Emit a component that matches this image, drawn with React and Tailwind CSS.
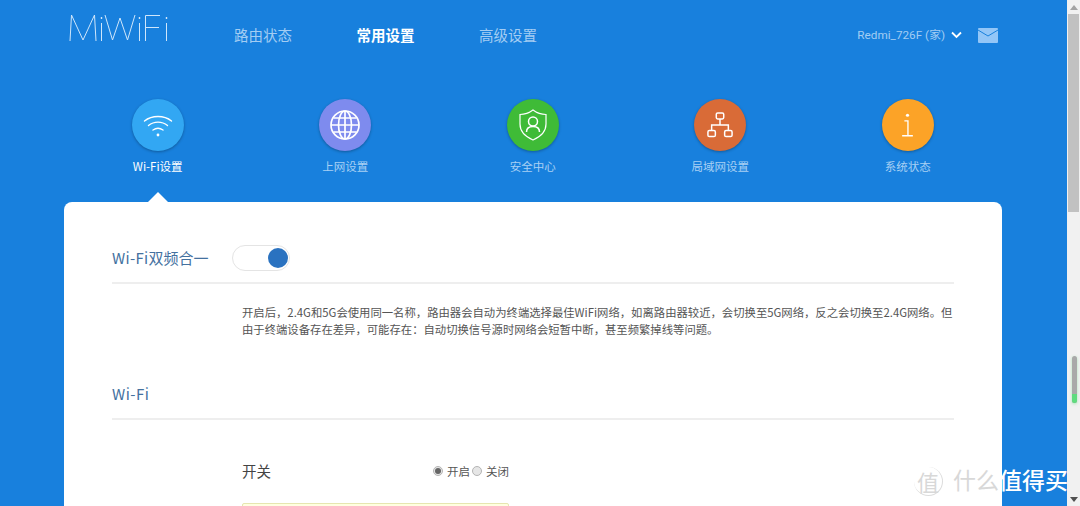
const cjk = { fontFamily: '"Noto Sans CJK SC", "Liberation Sans", sans-serif' };

function Logo() {
  return (
    <svg width="100" height="28" viewBox="0 0 100 28" fill="none" stroke="#cfe6fb" strokeWidth="1" aria-label="MiWiFi">
      <path d="M1 27 L2.5 1 L14 26 L25.5 1 L27 27" />
      <path d="M32.5 9 V27" />
      <path d="M32.5 3 V5" strokeWidth="1.4" />
      <path d="M36 1 L43.5 26 L51 4 L58.5 26 L66 1" />
      <path d="M70.5 9 V27" />
      <path d="M70.5 3 V5" strokeWidth="1.4" />
      <path d="M76.5 27 V1.5 H91 M76.5 13.5 H90" />
      <path d="M97.5 9 V27" />
      <path d="M97.5 3 V5" strokeWidth="1.4" />
    </svg>
  );
}

function WifiIcon() {
  return (
    <svg className="mt-[2px]" width="30" height="24" viewBox="0 0 30 24" fill="none" stroke="#fff" strokeWidth="1.4" strokeLinecap="round">
      <path d="M1.5 7 C9 1 21 1 28.5 7" />
      <path d="M5.5 11.5 C11 7 19 7 24.5 11.5" />
      <path d="M10 16 C13 14 17 14 20 16" />
      <circle cx="15" cy="21" r="1.4" fill="#fff" stroke="none" />
    </svg>
  );
}

function GlobeIcon() {
  return (
    <svg width="30" height="30" viewBox="0 0 30 30" fill="none" stroke="#fff" strokeWidth="1.7">
      <circle cx="15" cy="15" r="14" />
      <ellipse cx="15" cy="15" rx="6.5" ry="14" />
      <path d="M15 1 V29 M1 15 H29 M3.5 8 H26.5 M3.5 22 H26.5" />
    </svg>
  );
}

function ShieldIcon() {
  return (
    <svg width="28" height="32" viewBox="0 0 28 32" fill="none" stroke="#fff" strokeWidth="1.2">
      <path d="M14 1 C18 4 22 5.5 27 5.5 V15 C27 23 21 28 14 31 C7 28 1 23 1 15 V5.5 C6 5.5 10 4 14 1 Z" />
      <circle cx="14" cy="12.5" r="4.5" strokeWidth="1.5" />
      <path d="M7.5 23 C7.5 19.5 10 17.5 14 17.5 C18 17.5 20.5 19.5 20.5 23" strokeWidth="1.5" />
    </svg>
  );
}

function NetIcon() {
  return (
    <svg width="26" height="26" viewBox="0 0 28 28" fill="none" stroke="#fff" strokeWidth="1.6">
      <rect x="10" y="1" width="8" height="6.5" rx="1.5" />
      <rect x="1" y="20" width="8" height="6.5" rx="1.5" />
      <rect x="19" y="20" width="8" height="6.5" rx="1.5" />
      <path d="M14 7.5 V14 M5 20 V14 H23 V20" />
    </svg>
  );
}

function InfoIcon() {
  return (
    <svg width="13" height="25" viewBox="0 0 14 28" fill="none" stroke="#fff" strokeWidth="1.5">
      <circle cx="7" cy="2.5" r="1.8" fill="#fff" stroke="none" />
      <path d="M3.5 8.8 H7.5 V25 M1 25.5 H13" />
    </svg>
  );
}

const items = [
  { label: "Wi-Fi设置", bg: "bg-[#32a7f3]", icon: <WifiIcon />, active: true },
  { label: "上网设置", bg: "bg-[#7e8bee]", icon: <GlobeIcon /> },
  { label: "安全中心", bg: "bg-[#3fbb37]", icon: <ShieldIcon /> },
  { label: "局域网设置", bg: "bg-[#d96b37]", icon: <NetIcon /> },
  { label: "系统状态", bg: "bg-[#fca327]", icon: <InfoIcon /> },
];

function FeatureItem({ label, bg, icon, active }) {
  return (
    <div className="w-[187.5px] flex flex-col items-center">
      <div className={`w-[52px] h-[52px] rounded-full flex items-center justify-center shadow-[0_1px_3px_rgba(0,0,0,0.3)] ${bg}`}>
        {icon}
      </div>
      <div className={`mt-[5px] text-[11.5px] leading-[20px] ${active ? "text-white" : "text-[#a8d0f4]"}`}>{label}</div>
    </div>
  );
}

function Radio({ checked }) {
  return (
    <span className="w-[10px] h-[10px] rounded-full border border-[#b4b4b4] bg-[#e6e6e6] flex items-center justify-center">
      {checked && <span className="w-[6px] h-[6px] rounded-full bg-[#666]" />}
    </span>
  );
}

function Scrollbar() {
  return (
    <div className="w-[13px] h-full bg-[#f1f1f1] flex flex-col items-center relative shrink-0">
      <div className="h-[14px] shrink-0 flex items-center justify-center">
        <div className="w-0 h-0 border-x-[4px] border-x-transparent border-b-[5px] border-b-[#a3a3a3]" />
      </div>
      <div className="w-[11px] h-[198px] shrink-0 bg-[#c1c1c1]" />
      <div className="w-[5px] h-[47px] shrink-0 ml-[2px] mt-[144px] rounded-full bg-[#a9a9a9] relative overflow-hidden shadow-[0_1px_3px_rgba(95,220,126,0.5)]">
        <div className="absolute left-0 right-0 bottom-0 h-[9px] bg-[#5fdc7e]" />
      </div>
      <div className="mt-auto h-[14px] shrink-0 flex items-center justify-center">
        <div className="w-0 h-0 border-x-[4px] border-x-transparent border-t-[5px] border-t-[#505050]" />
      </div>
    </div>
  );
}

function Watermark() {
  return (
    <div className="absolute left-[914px] top-[467px] flex items-start" style={cjk}>
      <div className="w-[29px] h-[29px] rounded-full border-r border-b border-[#dcdcdc] flex items-center justify-center text-[22px] leading-none text-[#d8d8d8]">值</div>
      <div className="ml-[10px] text-[23px] leading-[24px] whitespace-nowrap">
        <span className="text-[#d8d8d8]">什么</span>
        <span className="text-white font-medium">值得买</span>
      </div>
    </div>
  );
}

export default function App() {
  return (
    <div className="w-[1080px] h-[506px] overflow-hidden flex relative bg-[#1880dd]" style={cjk}>
      <div className="flex-1 min-w-0 h-full flex flex-col">
        <header className="h-[70px] shrink-0 flex items-start">
          <div className="ml-[69px] mt-[14px] w-[100px] shrink-0"><Logo /></div>
          <nav className="ml-[65px] mt-[25px] flex gap-[64.5px] text-[14.5px] leading-[20px] text-[#a3cdf3]">
            <span>路由状态</span>
            <span className="text-white font-bold">常用设置</span>
            <span>高级设置</span>
          </nav>
          <div className="ml-auto mr-[69px] mt-[25px] flex items-center">
            <span className="text-[11.75px] leading-[20px] text-[#a3cdf3]" style={{ fontFamily: 'Roboto, "Noto Sans CJK SC", sans-serif' }}>Redmi_726F (家)</span>
            <svg className="ml-[6px]" width="11" height="8" viewBox="0 0 11 8" fill="none" stroke="#fff" strokeWidth="1.8"><path d="M1 1.5 L5.5 6 L10 1.5" /></svg>
            <svg className="ml-[16px]" width="20" height="15" viewBox="0 0 20 15"><rect width="20" height="15" rx="1" fill="#93c6f7" /><path d="M0 2 L10 8 L20 2" fill="none" stroke="#1880dd" strokeWidth="1" /></svg>
          </div>
        </header>
        <div className="mt-[29px] ml-[64px] shrink-0 flex">
          {items.map((it) => <FeatureItem key={it.label} {...it} />)}
        </div>
        <main className="relative ml-[64px] mr-[65px] mt-[26px] flex-1 min-h-0 bg-white rounded-t-[8px] px-[48px] text-[#444]">
          <div className="absolute left-[94px] -top-[10px] -ml-[10px] w-0 h-0 border-x-[10px] border-x-transparent border-b-[10px] border-b-white" />
          <section className="h-[82px] border-b-2 border-[#eeeeee] flex items-end pb-[10px]">
            <div className="flex items-center gap-[24px]">
              <h2 className="text-[15px] leading-[28px] text-[#44719f] whitespace-nowrap"><span className="tracking-[0.3px]">Wi-Fi</span>双频合一</h2>
              <div className="w-[58px] h-[26px] rounded-full border border-[#e4e4e4] bg-white flex items-center justify-end">
                <div className="w-[20px] h-[20px] rounded-full bg-[#2a72c0] mr-[1px]" />
              </div>
            </div>
          </section>
          <p className="ml-[130px] mt-[20px] text-[11.35px] leading-[17px] text-[#555] whitespace-nowrap overflow-hidden w-[711px]">
            开启后，2.4G和5G会使用同一名称，路由器会自动为终端选择最佳WiFi网络，如离路由器较近，会切换至5G网络，反之会切换至2.4G网络。但<br />
            由于终端设备存在差异，可能存在：自动切换信号源时网络会短暂中断，甚至频繁掉线等问题。
          </p>
          <section className="h-[82px] border-b-2 border-[#eeeeee] flex items-end pb-[10px]">
            <h2 className="text-[15px] leading-[28px] text-[#44719f] tracking-[0.5px]">Wi-Fi</h2>
          </section>
          <div className="ml-[130px] mt-[39px] flex items-center">
            <span className="w-[191px] text-[14.5px] leading-[24px] text-[#444]">开关</span>
            <label className="flex items-center gap-[4px] text-[11.5px] leading-[20px] text-[#555]"><Radio checked />开启</label>
            <label className="ml-[2px] flex items-center gap-[4px] text-[11.5px] leading-[20px] text-[#555]"><Radio />关闭</label>
          </div>
          <div className="ml-[130px] mt-[20px] w-[267px] h-[20px] rounded-[2px] border border-[#e6e6b0] bg-[#ffffe0]" />
        </main>
      </div>
      <Scrollbar />
      <Watermark />
    </div>
  );
}
